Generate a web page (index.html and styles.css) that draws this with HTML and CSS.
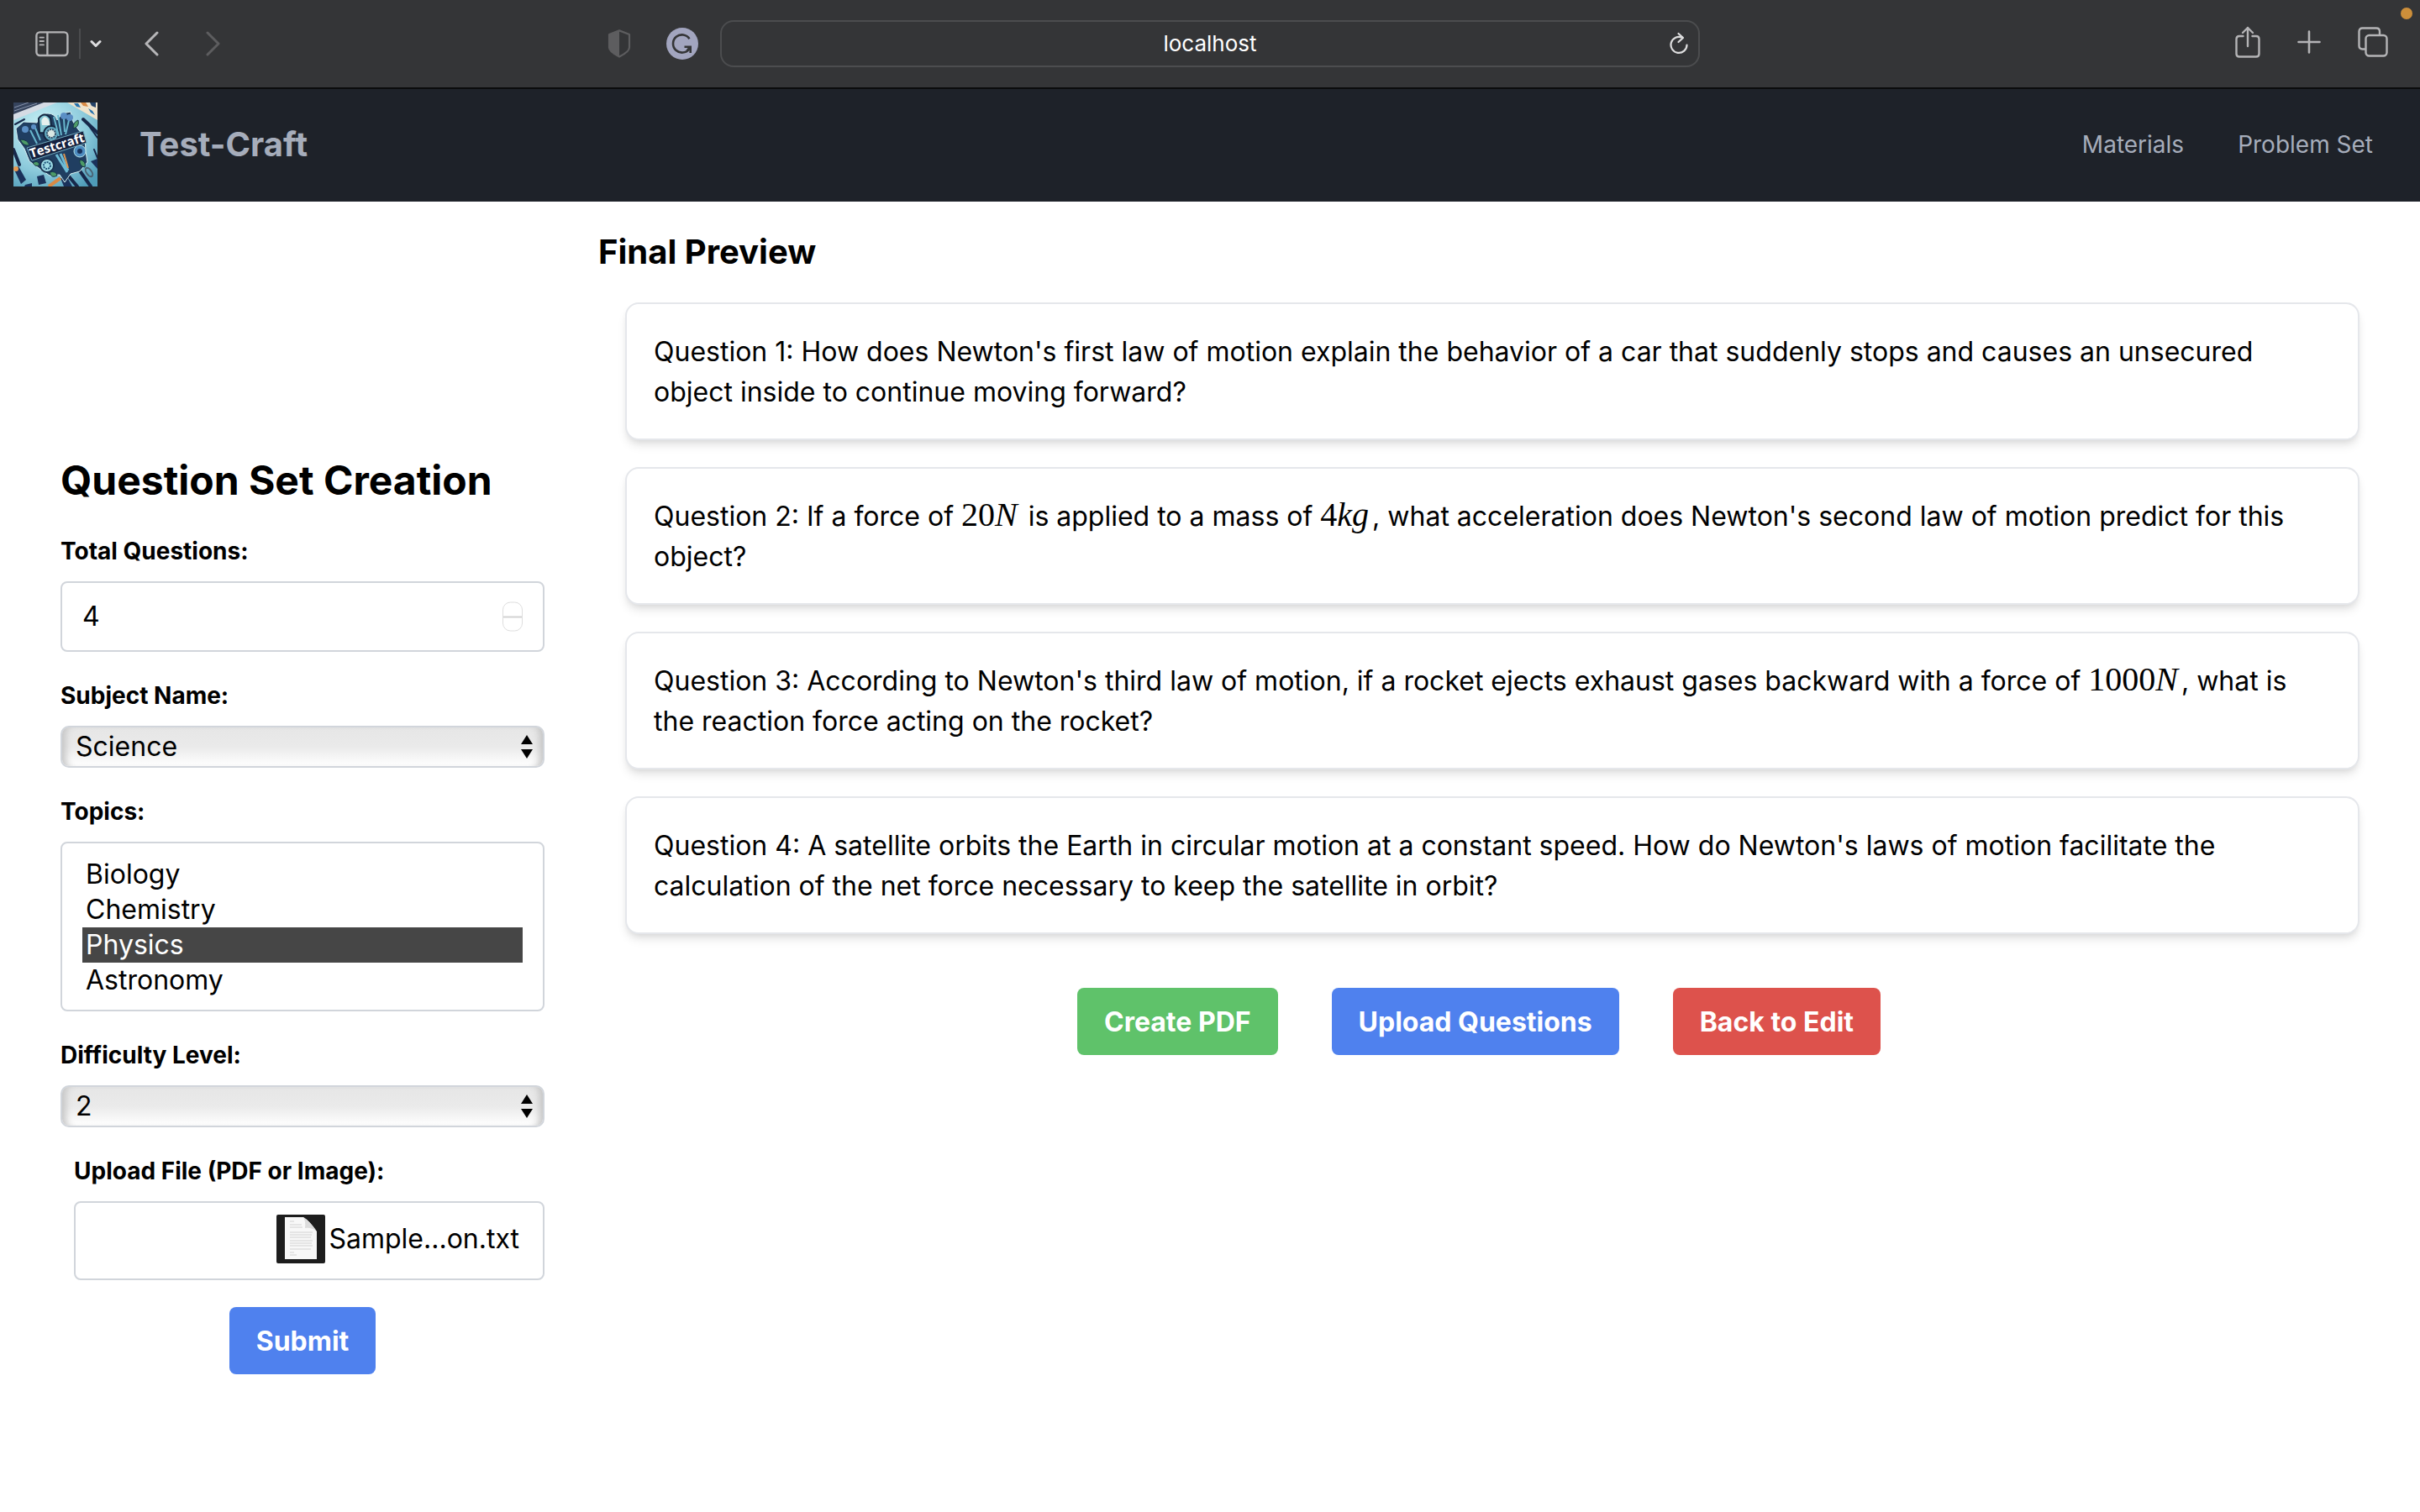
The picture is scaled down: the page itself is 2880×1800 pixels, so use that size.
FILE: index.html
```html
<!DOCTYPE html>
<html lang="en">
<head>
<meta charset="utf-8">
<meta name="viewport" content="width=device-width, initial-scale=1">
<title>Test-Craft</title>
<link rel="stylesheet" href="styles.css">
</head>
<body>
<div class="toolbar">
  <div class="toolbar-side toolbar-left">
    <button class="tool" type="button" aria-label="Sidebar">
      <svg width="40" height="32" viewBox="0 0 40 32" fill="none" stroke="#b4b4b6" stroke-width="2.4"><rect x="1.4" y="2.4" width="37" height="27.600" rx="4"/><path d="M14.400 2.400v27.600"/><path d="M5.500 8.600h4.500M5.500 13h4.500M5.500 17.400h4.500" stroke-width="1.800" stroke-linecap="round"/></svg>
    </button>
    <span class="divider"></span>
    <button class="tool" type="button" aria-label="Tab groups">
      <svg width="14" height="12" viewBox="0 0 14 12" fill="none" stroke="#dedee0" stroke-width="3" stroke-linecap="round" stroke-linejoin="round"><path d="M2 3.500l5 5 5-5"/></svg>
    </button>
    <button class="tool tool-back" type="button" aria-label="Back">
      <svg width="17" height="30" viewBox="0 0 17 30" fill="none" stroke="#b6b6b8" stroke-width="3" stroke-linecap="round" stroke-linejoin="round"><path d="M15 2L2 15l13 13"/></svg>
    </button>
    <button class="tool tool-forward" type="button" aria-label="Forward">
      <svg width="17" height="30" viewBox="0 0 17 30" fill="none" stroke="#5d5d5f" stroke-width="3" stroke-linecap="round" stroke-linejoin="round"><path d="M2 2l13 13L2 28"/></svg>
    </button>
    <button class="tool tool-shield" type="button" aria-label="Privacy report">
      <svg width="28" height="34" viewBox="0 0 28 34"><path d="M14 1.400L26 6v15.500q0 5-12 11.100Q2 26.500 2 21.500V6z" fill="none" stroke="#5d5d5f" stroke-width="2.200" stroke-linejoin="round"/><path d="M14 1.400L2 6v15.500q0 5 12 11.100z" fill="#5d5d5f"/></svg>
    </button>
    <button class="tool" type="button" aria-label="Grammarly">
      <svg width="38" height="38" viewBox="0 0 38 38"><circle cx="19" cy="19" r="19" fill="#a2a5bf"/><path d="M27.500 13.200A10.600 10.600 0 1 0 27.200 25.200" fill="none" stroke="#343537" stroke-width="2.600"/><path d="M21.500 22.800h7.200v7.200M28.200 23.200l-3.500 4" fill="none" stroke="#343537" stroke-width="2.600"/></svg>
    </button>
  </div>
  <div class="address">
    <span class="address-text">localhost</span>
    <button class="tool reload" type="button" aria-label="Reload">
      <svg width="22" height="28" viewBox="0 0 22 28" fill="none" stroke="#dededf" stroke-width="2.200" stroke-linecap="round" stroke-linejoin="round"><path d="M20.500 15.500A9.500 9.500 0 1 1 15 6.800"/><path d="M10.500 2l5.500 5-5.500 5"/></svg>
    </button>
  </div>
  <div class="toolbar-side toolbar-right">
    <button class="tool" type="button" aria-label="Share">
      <svg width="30" height="38" viewBox="0 0 30 38" fill="none" stroke="#b4b4b6" stroke-width="2.400" stroke-linecap="round" stroke-linejoin="round"><path d="M9.500 12H5q-3.500 0-3.500 3.500v17.500q0 3.500 3.500 3.500h20q3.500 0 3.500-3.500V15.500Q28.500 12 25 12h-4.500"/><path d="M15 24V2M9 8l6-6 6 6"/></svg>
    </button>
    <button class="tool" type="button" aria-label="New tab">
      <svg width="28" height="28" viewBox="0 0 28 28" fill="none" stroke="#b4b4b6" stroke-width="2.600" stroke-linecap="round"><path d="M14 1.500v25M1.500 14h25"/></svg>
    </button>
    <button class="tool" type="button" aria-label="Tab overview">
      <svg width="36" height="36" viewBox="0 0 36 36" fill="none" stroke="#b4b4b6" stroke-width="2.400"><rect x="9.500" y="10" width="25" height="24.500" rx="4"/><path d="M9.500 26.500H5.500q-4 0-4-4V5.500q0-4 4-4H22q4 0 4 4V10"/></svg>
    </button>
  </div>
  <span class="recording-dot"></span>
</div>

<header class="navbar">
  <svg class="logo" viewBox="0 0 100 100" role="img" aria-label="Testcraft logo">
    <defs>
      <radialGradient id="desk" cx=".35" cy=".3" r=".85"><stop offset="0" stop-color="#c9f1f6"/><stop offset=".6" stop-color="#8dcbdc"/><stop offset="1" stop-color="#4f9cb8"/></radialGradient>
    </defs>
    <rect width="100" height="100" fill="url(#desk)"/>
    <path d="M0 0h52L0 21z" fill="#d5dbe4"/><path d="M0 0h36L0 14z" fill="#35435c"/><path d="M1 10L28 1M1 6L18 0" stroke="#8793aa" stroke-width="1"/>
    <path d="M64 0h36v21z" fill="#eee3cc"/>
    <g fill="#2673ae"><path d="M72 1l5 0 3 5-5-1zM89 7l5 3 3 5-5-3z"/><path d="M80 0h6l3 5-6-1z" fill="#d98a45"/><path d="M91 0h7v6l-5-2z" fill="#244267"/></g>
    <g stroke="#17284a" stroke-width="4" stroke-linecap="round"><path d="M83 20l17 16M0 56l7 18M66 88l10 12M78 80l14 20" /><path d="M2 26L13 20M96 56l4 10M90 28l10 14" stroke-width="2"/></g>
    <path d="M1 80l5-4 9 16-6 5zM28 88l8-2 3 10-9 2zM92 70l8-3v12zM14 98l8-2v4H13zM56 90l8-1 6 11H60z" fill="#1a315a"/>
    <path d="M42 100l14-10" stroke="#d98a45" stroke-width="4"/><circle cx="3" cy="79" r="3" fill="#e79a51"/><ellipse cx="90" cy="83" rx="3" ry="6" fill="none" stroke="#4a6273" stroke-width="2" transform="rotate(-35 90 83)"/>
    <path d="M28 24q3-12 13-11 8 0 11 8l6-8 10-2 3 12 6 9 8 9 1 17 2 13-9 11-11 3-7 10-6-9-12 1-13-9-11-8-6-15-8-11-2-13 9-8z" fill="#203e61" stroke="#d7f1f2" stroke-width="1"/>
    <path d="M31 36l-1-17q7-9 14 0l2 18z" fill="#83c6d3" stroke="#142640" stroke-width="2"/><path d="M34 27q-2-8 3-10 6 1 6 10z" fill="#e6f1ee"/>
    <circle cx="45" cy="37" r="9" fill="#63abc2" stroke="#142640" stroke-width="2"/><circle cx="45" cy="37" r="5" fill="#d9e8e4" stroke="#35516b" stroke-width="2" stroke-dasharray="2 1"/>
    <g stroke="#68b7cd" stroke-width="2"><path d="M20 33l8 16M48 17l6 23M53 15l4 24M25 28l7 17M60 20l1 15M67 17l-5 21"/></g>
    <g fill="#5b8fc5"><circle cx="14" cy="32" r="4"/><circle cx="24" cy="29" r="3"/><circle cx="60" cy="16" r="4"/><circle cx="67" cy="18" r="4"/></g>
    <g fill="#4d9b67" stroke="#153449" stroke-width="1"><path d="M71 31q0-8 6-10 2 8-6 10zM8 44q9 0 11 7-8 1-11-7zM23 72q6-4 8 2-4 4-8-2zM43 83q8-2 9 4-7 4-9-4zM79 68q8 2 6 9-7-1-6-9z"/></g>
    <circle cx="40" cy="75" r="8" fill="#9edbe5" stroke="#193250" stroke-width="2"/><circle cx="40" cy="75" r="4" fill="none" stroke="#21567b" stroke-width="2" stroke-dasharray="2 1"/><circle cx="79" cy="58" r="7" fill="#4d8cc0" stroke="#b6e4ea" stroke-width="1"/><circle cx="79" cy="58" r="3" fill="#17315a"/>
    <path d="M51 62l13 21M56 61l9 20" stroke="#6dbcd6" stroke-width="3"/><path d="M60 61l5 17" stroke="#db9450" stroke-width="2"/>
    <path d="M16 54L83 34l4 14L22 69z" fill="#15213f" stroke="#70aabd" stroke-width="1"/>
    <text class="logo-text" x="21" y="66" transform="rotate(-17 21 66)">Testcraft</text>
  </svg>
  <a class="brand" href="#">Test-Craft</a>
  <nav class="links">
    <a href="#">Materials</a>
    <a href="#">Problem Set</a>
  </nav>
</header>

<main class="content">
  <form class="creator">
    <h1 class="form-title">Question Set Creation</h1>
    <div class="field">
      <label for="total">Total Questions:</label>
      <div class="number-box">
        <input id="total" type="number" value="4">
        <svg class="stepper" width="24" height="36" viewBox="0 0 24 36" fill="none" stroke="#d2d2d2"><rect x=".500" y="1" width="23" height="34" rx="9" stroke="#dedede"/><path d="M1 18.500h22" stroke-width="2"/></svg>
      </div>
    </div>
    <div class="field">
      <label for="subject">Subject Name:</label>
      <div class="select-box">
        <select id="subject"><option>Science</option></select>
        <svg class="arrows" width="14" height="28" viewBox="0 0 14 28"><path d="M7 0l7 11H0zM0 17h14L7 28z"/></svg>
      </div>
    </div>
    <div class="field">
      <label for="topics">Topics:</label>
      <select id="topics" class="topics" multiple size="4">
        <option>Biology</option>
        <option>Chemistry</option>
        <option selected>Physics</option>
        <option>Astronomy</option>
      </select>
    </div>
    <div class="field">
      <label for="level">Difficulty Level:</label>
      <div class="select-box">
        <select id="level"><option>2</option></select>
        <svg class="arrows" width="14" height="28" viewBox="0 0 14 28"><path d="M7 0l7 11H0zM0 17h14L7 28z"/></svg>
      </div>
    </div>
    <div class="field field-upload">
      <label for="upload">Upload File (PDF or Image):</label>
      <div class="file-box">
        <input id="upload" type="file">
        <svg width="58" height="58" viewBox="0 0 58 58"><rect width="58" height="58" rx="2" fill="#1d1d1d"/><path d="M10 3h22q7 4 16 17v33H10z" fill="#f8f8f8"/><path d="M32 3q3 5 2 13 8-1 14 4Q40 8 32 3z" fill="#dcdcdc"/><path d="M16 8h5M16 12h14M16 15h15M16 21h27M16 24h26M16 27h25M16 31h27M16 34h26M16 37h27M16 41h25M16 45h5M16 48h8" stroke="#d2d2d2" stroke-width="1"/></svg>
        <span class="file-name">Sample...on.txt</span>
      </div>
    </div>
    <button class="btn btn-blue submit" type="button">Submit</button>
  </form>

  <section class="preview">
    <h2 class="preview-title">Final Preview</h2>
    <div class="questions">
      <p class="card">Question 1: How does Newton's first law of motion explain the behavior of a car that suddenly stops and causes an unsecured object inside to continue moving forward?</p>
      <p class="card">Question 2: If a force of <span class="math">20<i>N</i></span> is applied to a mass of <span class="math">4<i>kg</i></span>, what acceleration does Newton's second law of motion predict for this object?</p>
      <p class="card">Question 3: According to Newton's third law of motion, if a rocket ejects exhaust gases backward with a force of <span class="math">1000<i>N</i></span>, what is the reaction force acting on the rocket?</p>
      <p class="card">Question 4: A satellite orbits the Earth in circular motion at a constant speed. How do Newton's laws of motion facilitate the calculation of the net force necessary to keep the satellite in orbit?</p>
    </div>
    <div class="actions">
      <button class="btn btn-green" type="button">Create PDF</button>
      <button class="btn btn-blue" type="button">Upload Questions</button>
      <button class="btn btn-red" type="button">Back to Edit</button>
    </div>
  </section>
</main>
</body>
</html>
```
FILE: styles.css
```css
* { box-sizing: border-box; }

body {
  margin: 0;
  background: #fff;
  color: #000;
  font-family: Inter, "Liberation Sans", sans-serif;
  font-size: 32px;
  line-height: 48px;
}

h1, h2, p { margin: 0; }
svg { display: block; flex: none; }

input, select, button {
  font: inherit;
  color: inherit;
}

/* Browser toolbar */
.toolbar {
  position: relative;
  display: grid;
  grid-template-columns: 1fr 40.5% 1fr;
  align-items: center;
  height: 106px;
  background: #343537;
  border-bottom: 2px solid #0a0b0c;
}

.toolbar-side {
  display: flex;
  align-items: center;
}

.toolbar-left { padding: 0 26px 1px 42px; }

.toolbar-right {
  justify-content: flex-end;
  gap: 44px;
  padding: 0 38px 4px 0;
}

.tool {
  display: block;
  padding: 0;
  border: 0;
  background: none;
}

.divider {
  width: 2px;
  height: 36px;
  margin: 0 11px 0 12px;
  background: #4b4c4e;
}

.tool-back { margin-left: 51px; }
.tool-forward { margin-left: 56px; }
.tool-shield { margin: 0 42px 0 auto; }

.address {
  position: relative;
  display: flex;
  align-items: center;
  justify-content: center;
  height: 56px;
  border: 2px solid #4c4d4f;
  border-radius: 16px;
}

.address-text {
  color: #fff;
  font-size: 26px;
  line-height: 32px;
}

.reload {
  position: absolute;
  right: 12px;
}

.recording-dot {
  position: absolute;
  top: 9px;
  right: 9px;
  width: 14px;
  height: 14px;
  border-radius: 50%;
  background: #cd8f3a;
}

/* Site header */
.navbar {
  display: flex;
  align-items: center;
  padding: 16px 56px 18px 16px;
  background: #1e2229;
  color: #a6adbb;
}

.logo {
  width: 100px;
  height: 100px;
}

.logo-text {
  fill: #fff;
  font-family: "Open Sans", sans-serif;
  font-size: 15px;
  font-weight: 700;
}

.navbar a {
  color: inherit;
  text-decoration: none;
}

.brand {
  margin-left: 50px;
  font-size: 40px;
  font-weight: 700;
}

.links {
  display: flex;
  gap: 64px;
  margin-left: auto;
  font-size: 28px;
}

/* Page columns */
.content {
  display: grid;
  grid-template-columns: minmax(0, 36fr) minmax(0, 131fr);
  gap: 64px;
  padding: 0 72px;
}

.creator {
  display: flex;
  flex-direction: column;
  gap: 32px;
  padding: 300px 0 80px;
}

.form-title {
  font-size: 48px;
  font-weight: 700;
  line-height: 64px;
}

.field {
  display: flex;
  flex-direction: column;
  gap: 16px;
}

.field label {
  font-size: 28px;
  font-weight: 700;
  line-height: 40px;
}

.number-box,
.file-box {
  display: flex;
  align-items: center;
  border: 2px solid #d1d5db;
  border-radius: 8px;
}

.number-box {
  height: 84px;
  padding: 0 24px;
}

.number-box input {
  flex: 1;
  min-width: 0;
  padding: 0;
  border: 0;
  background: none;
  appearance: textfield;
}

.number-box input::-webkit-inner-spin-button { appearance: none; }

.select-box {
  position: relative;
  height: 50px;
}

.select-box select {
  width: 100%;
  height: 50px;
  padding: 0 40px 0 16px;
  border: 2px solid #d1d5db;
  border-radius: 10px;
  background: linear-gradient(#e6e6e6, #eaeaea 50%, #fff);
  box-shadow: inset 10px 0 8px -6px #c4c4c4, inset -10px 0 8px -6px #c4c4c4;
  line-height: 40px;
  appearance: none;
}

.arrows {
  position: absolute;
  top: 11px;
  right: 14px;
  pointer-events: none;
}

.topics {
  width: 100%;
  height: 202px;
  padding: 16px 24px;
  border: 2px solid #d1d5db;
  border-radius: 8px;
  background: #fff;
  overflow: hidden;
}

.topics option {
  height: 42px;
  min-height: 42px;
  padding: 1px 4px 0;
  line-height: 42px;
}

.topics option:checked {
  background: linear-gradient(#464646, #464646);
  color: #fff;
}

.field-upload { padding-left: 16px; }

.file-box {
  position: relative;
  justify-content: flex-end;
  gap: 4px;
  height: 94px;
  padding: 0 28px 4px 24px;
}

.file-box input {
  position: absolute;
  inset: 0;
  opacity: 0;
}

.btn {
  height: 80px;
  padding: 2px 32px 0;
  border: 0;
  border-radius: 8px;
  color: #fff;
  font-weight: 700;
}

.submit { align-self: center; }
.btn-blue { background: #4f81ee; }
.btn-green { background: #5fc26a; }
.btn-red { background: #dd524c; }

.preview { padding-top: 32px; }

.preview-title {
  font-size: 40px;
  font-weight: 700;
  line-height: 56px;
}

.questions {
  display: flex;
  flex-direction: column;
  gap: 32px;
  margin: 32px 0 64px;
  padding-left: 32px;
}

.card {
  padding: 33px 32px 31px;
  border: 2px solid #e5e7eb;
  border-radius: 16px;
  background: #fff;
  box-shadow: 0 8px 12px -2px rgba(0, 0, 0, .1), 0 4px 8px -4px rgba(0, 0, 0, .1);
}

.math {
  margin-right: 4px;
  font-family: "Liberation Serif", serif;
  font-size: 40px;
  line-height: 32px;
}

.actions {
  display: flex;
  justify-content: center;
  gap: 64px;
}
```
